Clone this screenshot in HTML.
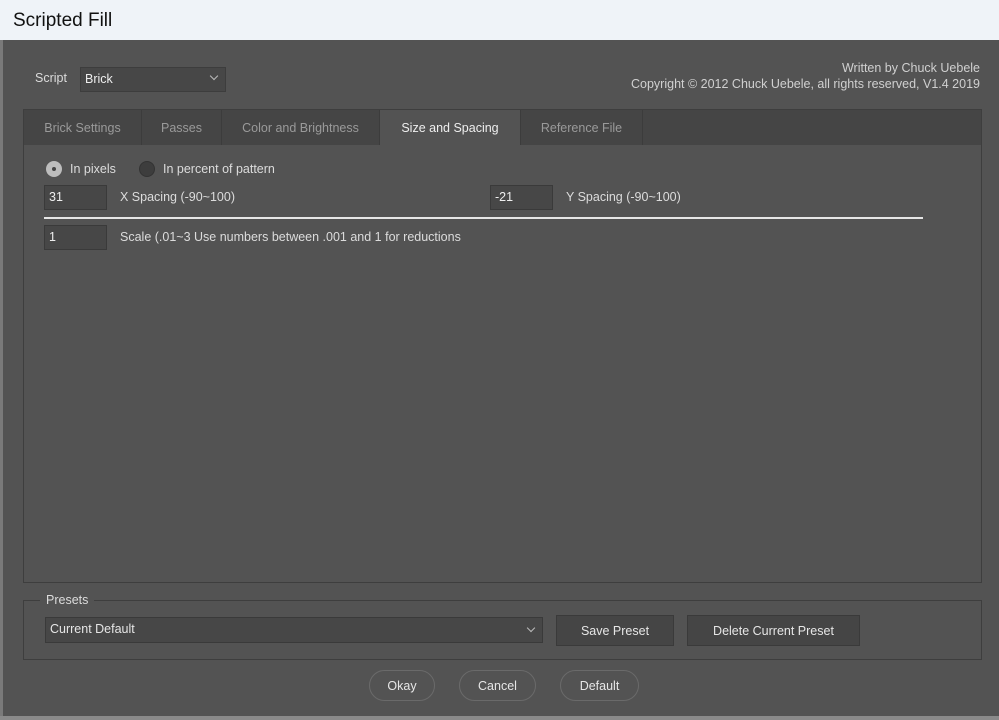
<!DOCTYPE html>
<html><head><style>
*{box-sizing:border-box;margin:0;padding:0}
body{width:999px;height:720px;background:#535353;font-family:"Liberation Sans",sans-serif;font-size:12.5px;color:#dcdcdc;position:relative;overflow:hidden}
.a{position:absolute}
.title{left:0;top:0;width:999px;height:40px;background:#eff3f8;color:#111;font-size:19px;padding:10px 0 0 13px}
.inp{background:#474747;border:1px solid #3a3a3a;color:#eee;padding:4px 0 0 4px;height:25px}
.tab{top:110px;height:35px;background:#454545;color:#9a9a9a;text-align:center;padding-top:11px;border-right:1px solid #3c3c3c}
.btn{background:#454545;border:1px solid #3a3a3a;text-align:center;padding-top:8px;color:#e6e6e6}
.pill{border:1px solid #6a6a6a;border-radius:16px;text-align:center;padding-top:8px;height:31px;top:670px;color:#e6e6e6}
.chev{position:absolute;right:8px;top:5px;width:6px;height:6px;border-right:1px solid #bbb;border-bottom:1px solid #bbb;transform:rotate(45deg)}
</style></head><body>
<div class="a title">Scripted Fill</div>
<div class="a" style="left:0;top:40px;width:3px;height:680px;background:#7a7a7a"></div>
<div class="a" style="left:0;top:716px;width:999px;height:4px;background:#8a8a8a"></div>
<div class="a" style="left:35px;top:71px">Script</div>
<div class="a inp" style="left:80px;top:67px;width:146px;height:25px;border-color:#3d3d3d">Brick<span class="chev"></span></div>
<div class="a" style="right:19px;top:60px;text-align:right;line-height:16px;color:#d0d0d0">Written by Chuck Uebele<br>Copyright © 2012 Chuck Uebele, all rights reserved, V1.4 2019</div>
<div class="a" style="left:23px;top:109px;width:959px;height:474px;border:1px solid #3e3e3e"></div>
<div class="a" style="left:24px;top:110px;width:957px;height:35px;background:#454545"></div>
<div class="a tab" style="left:24px;width:118px">Brick Settings</div>
<div class="a tab" style="left:142px;width:80px">Passes</div>
<div class="a tab" style="left:222px;width:158px">Color and Brightness</div>
<div class="a tab" style="left:380px;width:141px;background:#535353;color:#eee">Size and Spacing</div>
<div class="a tab" style="left:521px;width:122px">Reference File</div>
<div class="a" style="left:46px;top:161px;width:16px;height:16px;border-radius:50%;background:#bdbdbd"></div>
<div class="a" style="left:52px;top:167px;width:4px;height:4px;border-radius:50%;background:#444"></div>
<div class="a" style="left:70px;top:162px">In pixels</div>
<div class="a" style="left:139px;top:161px;width:16px;height:16px;border-radius:50%;background:#3d3d3d;border:1px solid #333"></div>
<div class="a" style="left:163px;top:162px">In percent of pattern</div>
<div class="a inp" style="left:44px;top:185px;width:63px">31</div>
<div class="a" style="left:120px;top:190px">X Spacing (-90~100)</div>
<div class="a inp" style="left:490px;top:185px;width:63px">-21</div>
<div class="a" style="left:566px;top:190px">Y Spacing (-90~100)</div>
<div class="a" style="left:44px;top:217px;width:879px;height:2px;background:#e6e6e6"></div>
<div class="a inp" style="left:44px;top:225px;width:63px">1</div>
<div class="a" style="left:120px;top:230px">Scale (.01~3 Use numbers between .001 and 1 for reductions</div>
<div class="a" style="left:23px;top:600px;width:959px;height:60px;border:1px solid #3e3e3e"></div>
<div class="a" style="left:40px;top:593px;padding:0 6px;background:#535353">Presets</div>
<div class="a inp" style="left:45px;top:617px;width:498px;height:26px;color:#e6e6e6">Current Default<span class="chev" style="top:7px"></span></div>
<div class="a btn" style="left:556px;top:615px;width:118px;height:31px">Save Preset</div>
<div class="a btn" style="left:687px;top:615px;width:173px;height:31px">Delete Current Preset</div>
<div class="a pill" style="left:369px;width:66px">Okay</div>
<div class="a pill" style="left:459px;width:77px">Cancel</div>
<div class="a pill" style="left:560px;width:79px">Default</div>
</body></html>
